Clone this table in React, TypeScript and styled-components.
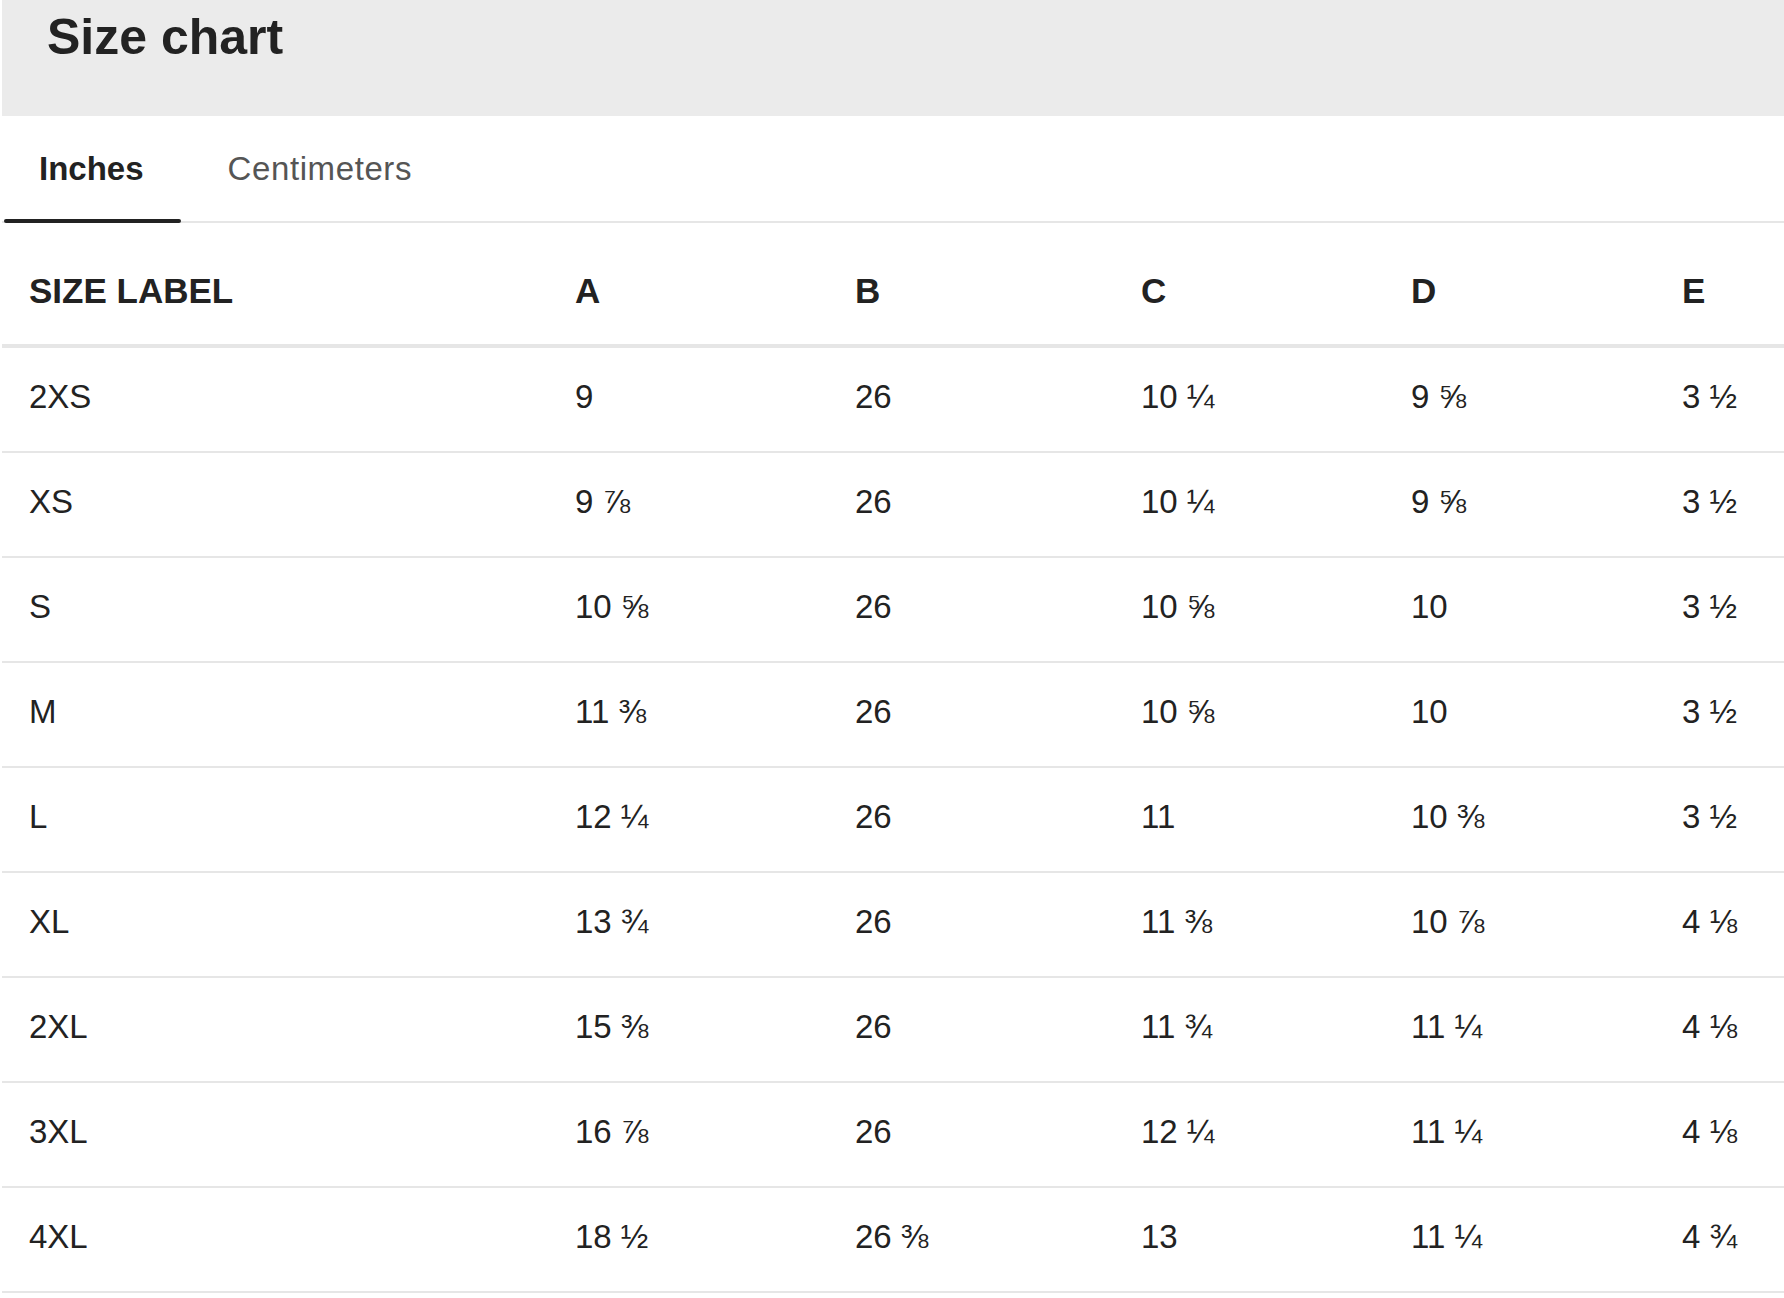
import styled, { createGlobalStyle } from "styled-components";
import { useState } from "react";

const GlobalStyle = createGlobalStyle`
  html, body {
    margin: 0;
    padding: 0;
    background: #ffffff;
  }
  body {
    font-family: "Liberation Sans", Arial, sans-serif;
    color: #222222;
  }
`;

const Page = styled.div`
  padding-left: 2px;
`;

const Header = styled.header`
  background: #ebebeb;
  height: 116px;
  box-sizing: border-box;
  padding: 7px 0 0 45px;
`;

const Title = styled.h1`
  margin: 0;
  font-size: 50px;
  line-height: 60px;
  font-weight: 700;
  color: #222222;
`;

const TabBar = styled.div`
  display: flex;
  height: 107px;
  box-sizing: border-box;
  border-bottom: 2px solid #e6e6e6;
  gap: 10px;
`;

const Tab = styled.button<{ $active?: boolean }>`
  position: relative;
  display: flex;
  align-items: center;
  padding: 0 37px;
  border: none;
  background: none;
  font-family: inherit;
  font-size: 33px;
  font-weight: ${(p) => (p.$active ? 700 : 400)};
  letter-spacing: ${(p) => (p.$active ? "0" : "0.6px")};
  color: ${(p) => (p.$active ? "#222222" : "#555555")};
  cursor: pointer;

  &::after {
    content: "";
    display: ${(p) => (p.$active ? "block" : "none")};
    position: absolute;
    left: 2px;
    right: 0;
    bottom: -2px;
    height: 4px;
    border-radius: 2px;
    background: #222222;
  }
`;

const Row = styled.div<{ $head?: boolean }>`
  display: grid;
  grid-template-columns: 546px 280px 286px 270px 271px 1fr;
  align-items: center;
  box-sizing: border-box;
  height: ${(p) => (p.$head ? "125px" : "105px")};
  padding: ${(p) => (p.$head ? "15px 0 0" : "0 0 5px")};
  border-bottom: ${(p) => (p.$head ? "4px" : "2px")} solid #e6e6e6;
`;

const Cell = styled.div<{ $head?: boolean }>`
  padding-left: 27px;
  font-size: ${(p) => (p.$head ? "35px" : "33px")};
  font-weight: ${(p) => (p.$head ? 700 : 400)};
  color: #222222;
  white-space: nowrap;
`;

const columns = ["SIZE LABEL", "A", "B", "C", "D", "E"];

const inches: string[][] = [
  ["2XS", "9", "26", "10 ¼", "9 ⅝", "3 ½"],
  ["XS", "9 ⅞", "26", "10 ¼", "9 ⅝", "3 ½"],
  ["S", "10 ⅝", "26", "10 ⅝", "10", "3 ½"],
  ["M", "11 ⅜", "26", "10 ⅝", "10", "3 ½"],
  ["L", "12 ¼", "26", "11", "10 ⅜", "3 ½"],
  ["XL", "13 ¾", "26", "11 ⅜", "10 ⅞", "4 ⅛"],
  ["2XL", "15 ⅜", "26", "11 ¾", "11 ¼", "4 ⅛"],
  ["3XL", "16 ⅞", "26", "12 ¼", "11 ¼", "4 ⅛"],
  ["4XL", "18 ½", "26 ⅜", "13", "11 ¼", "4 ¾"],
];

export default function App() {
  const [unit, setUnit] = useState<"in" | "cm">("in");

  return (
    <Page>
      <GlobalStyle />
      <Header>
        <Title>Size chart</Title>
      </Header>
      <TabBar>
        <Tab $active={unit === "in"} onClick={() => setUnit("in")}>
          Inches
        </Tab>
        <Tab $active={unit === "cm"} onClick={() => setUnit("cm")}>
          Centimeters
        </Tab>
      </TabBar>
      <Row $head>
        {columns.map((c) => (
          <Cell $head key={c}>
            {c}
          </Cell>
        ))}
      </Row>
      {inches.map((r) => (
        <Row key={r[0]}>
          {r.map((v, i) => (
            <Cell key={i}>{v}</Cell>
          ))}
        </Row>
      ))}
    </Page>
  );
}
